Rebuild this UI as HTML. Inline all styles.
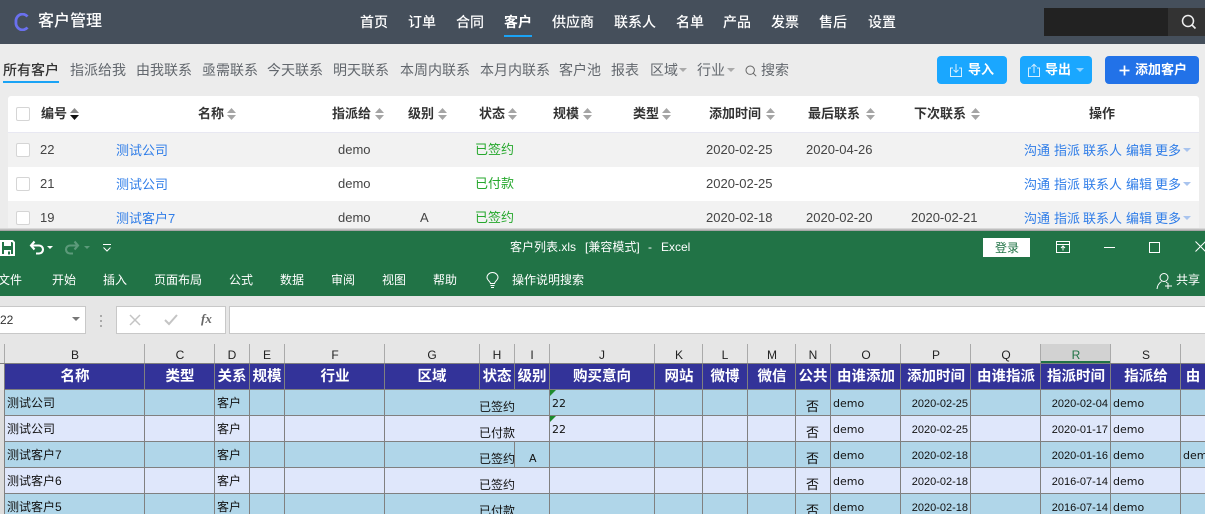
<!DOCTYPE html>
<html><head><meta charset="utf-8"><style>
html,body{margin:0;padding:0;width:1205px;height:514px;overflow:hidden;background:#ececec}
body{position:relative;font-family:"Liberation Sans","Noto Sans CJK SC",sans-serif}
span,b,i,div,svg{position:absolute;white-space:nowrap}
#hd{left:0;top:0;width:1205px;height:44px;background:#454f5b}
#hd span{top:12px;line-height:20px;font-size:14px;color:#fff;font-weight:500}
#sub span{top:60px;line-height:20px;font-size:14px;color:#62676d}
.btn{top:56px;height:28px;border-radius:4px;background:#1aa7ff;color:#fff;font-size:13px;line-height:28px;font-weight:700}
.th span{top:104px;line-height:20px;font-size:13px;font-weight:700;color:#333}
.s{width:9px;height:12px;top:108px}
.row{left:8px;width:1191px;height:34px}
.row span{top:7px;line-height:20px;font-size:13px;color:#444}
.row .l{color:#2f7de8;top:8px}.row .g{color:#26a82d}
.cb{left:8px;top:10px;width:12px;height:12px;border:1px solid #d5d5d5;border-radius:2px;background:#fff}
.x1{left:1016px}.x2{left:1046px}.x3{left:1075px}.x4{left:1118px}.x5{left:1147px}
.car{width:0;height:0;border:4px solid transparent;border-top:4px solid #a9c4ee;border-bottom:0}
#xl{left:0;top:231px;width:1205px;height:283px;background:#e6e6e6;overflow:hidden}
#gr{left:0;top:0;width:1205px;height:65px;background:#217346}
#gr span{color:#fff;font-size:12px;line-height:16px}
.tab span{top:41px}
.hl{top:113px;width:1px;height:19px;background:#aaa}
.cl{top:116px;line-height:16px;font-size:12px;color:#222;text-align:center;transform:translateX(-50%)}
.vh{top:133px;width:1px;height:26px;background:#808080}
.ch{top:134px;height:25px;line-height:25px;font-size:14.5px;font-weight:700;color:#fff;transform:translateX(-50%)}
.r{left:0;width:1205px;height:25px}
.r span{font-size:12px;line-height:16px;color:#111;top:5px}
.r .lo{top:9px}
.r .no{top:9px;font-size:13px}
.r .dm{font-family:"DejaVu Sans",sans-serif;font-size:11px;top:6px}
.r .dt{font-size:11px;top:6px;width:60px;text-align:right}
.r .tr{left:550px;top:0;width:0;height:0;border-top:6px solid #1c8a2c;border-right:6px solid transparent}
.v{width:1px;background:#808080}
</style></head><body>

<div id="hd">
<svg style="left:14px;top:13px" width="15" height="18" viewBox="0 0 15 18"><path d="M13.500 3.500A6.600 6.800 0 0 0 2 9a6.600 6.800 0 0 0 11.500 5.500" fill="none" stroke="#6a70ef" stroke-width="2.800"/></svg>
<span style="left:38px;top:11px;font-size:16px;line-height:22px">客户管理</span>
<span style="left:360px">首页</span><span style="left:408px">订单</span><span style="left:456px">合同</span><span style="left:504px;font-weight:700">客户</span><span style="left:552px">供应商</span><span style="left:614px">联系人</span><span style="left:676px">名单</span><span style="left:723px">产品</span><span style="left:771px">发票</span><span style="left:819px">售后</span><span style="left:868px">设置</span>
<div style="left:504px;top:35px;width:28px;height:2px;background:#1aa3f5"></div>
<div style="left:1044px;top:8px;width:124px;height:28px;background:#222"></div>
<div style="left:1168px;top:8px;width:37px;height:28px;background:#333"></div>
<svg style="left:1181px;top:14px" width="16" height="16" viewBox="0 0 16 16"><circle cx="7" cy="7" r="5.500" fill="none" stroke="#f0f0f0" stroke-width="1.500"/><path d="M11 11l3.500 3.500" stroke="#f0f0f0" stroke-width="1.600"/></svg>
</div>

<div id="sub">
<span style="left:3px;color:#333;font-weight:500">所有客户</span>
<div style="left:3px;top:81px;width:56px;height:2px;background:#1aa3f5"></div>
<span style="left:70px">指派给我</span><span style="left:136px">由我联系</span><span style="left:202px">亟需联系</span><span style="left:267px">今天联系</span><span style="left:333px">明天联系</span><span style="left:400px">本周内联系</span><span style="left:480px">本月内联系</span><span style="left:559px">客户池</span><span style="left:611px">报表</span><span style="left:650px">区域</span><span style="left:697px">行业</span><span style="left:761px">搜索</span>
<div class="car" style="left:679px;top:68px;border-top-color:#aaa"></div>
<div class="car" style="left:727px;top:68px;border-top-color:#aaa"></div>
<svg style="left:745px;top:65px" width="12" height="12" viewBox="0 0 12 12"><circle cx="5.200" cy="5.200" r="4.200" fill="none" stroke="#666" stroke-width="1"/><path d="M8.200 8.200l3 3" stroke="#666"/></svg>
</div>

<div class="btn" style="left:937px;width:70px"><span style="left:31px">导入</span>
<svg style="left:12px;top:7px" width="14" height="15" viewBox="0 0 14 15"><path d="M4 5H1.500v8.500h11V5H10M7 1v8M4.500 6.800L7 9.300l2.500-2.500" fill="none" stroke="#d5efff" stroke-width="1"/></svg></div>
<div class="btn" style="left:1020px;width:72px"><span style="left:25px">导出</span>
<svg style="left:7px;top:7px" width="14" height="15" viewBox="0 0 14 15"><path d="M4 5H1.500v8.500h11V5H10M7 10V1.500M4.500 3.800L7 1.300l2.500 2.500" fill="none" stroke="#d5efff" stroke-width="1"/></svg>
<div class="car" style="left:56px;top:12px;border-top-color:#8fd2ff"></div></div>
<div class="btn" style="left:1105px;width:94px;background:#2272e8"><span style="left:30px">添加客户</span>
<svg style="left:14px;top:9px" width="11" height="11" viewBox="0 0 11 11"><path d="M5.500 .5v10M.5 5.500h10" stroke="#fff" stroke-width="1.700"/></svg></div>

<div style="left:8px;top:96px;width:1191px;height:36px;background:#fff;border-radius:3px 3px 0 0"></div>
<div style="left:8px;top:132px;width:1191px;height:1px;background:#e8e8f2"></div>
<div class="cb" style="left:16px;top:107px"></div>
<div class="th">
<span style="left:41px">编号</span><span style="left:198px">名称</span><span style="left:332px">指派给</span><span style="left:408px">级别</span><span style="left:479px">状态</span><span style="left:553px">规模</span><span style="left:633px">类型</span><span style="left:709px">添加时间</span><span style="left:808px">最后联系</span><span style="left:914px">下次联系</span><span style="left:1089px">操作</span>
</div>
<svg width="0" height="0" style="left:0;top:0"><defs><g id="so"><path d="M0 5L4.500 0 9 5zM0 7l4.500 5L9 7z" fill="#a5a5a5"/></g></defs></svg>
<svg class="s" style="left:70px"><path d="M0 5L4.500 0 9 5z" fill="#888"/><path d="M0 7l4.500 5L9 7z" fill="#111"/></svg>
<svg class="s" style="left:227px"><use href="#so"/></svg>
<svg class="s" style="left:375px"><use href="#so"/></svg>
<svg class="s" style="left:438px"><use href="#so"/></svg>
<svg class="s" style="left:508px"><use href="#so"/></svg>
<svg class="s" style="left:583px"><use href="#so"/></svg>
<svg class="s" style="left:662px"><use href="#so"/></svg>
<svg class="s" style="left:766px"><use href="#so"/></svg>
<svg class="s" style="left:866px"><use href="#so"/></svg>
<svg class="s" style="left:971px"><use href="#so"/></svg>

<div class="row" style="top:133px;background:#f2f2f2"><div class="cb"></div>
<span style="left:32px">22</span><span class="l" style="left:108px">测试公司</span><span style="left:330px">demo</span><span class="g" style="left:467px">已签约</span><span style="left:698px">2020-02-25</span><span style="left:798px">2020-04-26</span>
<span class="l x1">沟通</span><span class="l x2">指派</span><span class="l x3">联系人</span><span class="l x4">编辑</span><span class="l x5">更多</span><div class="car" style="left:1175px;top:15px"></div></div>
<div class="row" style="top:167px;background:#fff"><div class="cb"></div>
<span style="left:32px">21</span><span class="l" style="left:108px">测试公司</span><span style="left:330px">demo</span><span class="g" style="left:467px">已付款</span><span style="left:698px">2020-02-25</span>
<span class="l x1">沟通</span><span class="l x2">指派</span><span class="l x3">联系人</span><span class="l x4">编辑</span><span class="l x5">更多</span><div class="car" style="left:1175px;top:15px"></div></div>
<div class="row" style="top:201px;background:#f2f2f2"><div class="cb"></div>
<span style="left:32px">19</span><span class="l" style="left:108px">测试客户7</span><span style="left:330px">demo</span><span style="left:412px">A</span><span class="g" style="left:467px">已签约</span><span style="left:698px">2020-02-18</span><span style="left:798px">2020-02-20</span><span style="left:903px">2020-02-21</span>
<span class="l x1">沟通</span><span class="l x2">指派</span><span class="l x3">联系人</span><span class="l x4">编辑</span><span class="l x5">更多</span><div class="car" style="left:1175px;top:15px"></div></div>
<div style="left:0;top:228px;width:1205px;height:3px;background:linear-gradient(#e4e4e4,#9a9a9a)"></div>

<div id="xl">
<div id="gr">
<svg style="left:0;top:9px" width="15" height="16" viewBox="0 0 15 16"><path d="M1 1h11.500L14 2.500V15H1z" fill="none" stroke="#fff" stroke-width="2"/><path d="M4 1h7v5H4zM4 10h7v5H4z" fill="#fff"/><path d="M8 11.500h2v3H8z" fill="#217346"/></svg>
<svg style="left:29px;top:9px" width="16" height="16" viewBox="0 0 16 16"><path d="M5.500 1.500L2 5.500l3.500 4M2.500 5.500H10a3.800 3.800 0 0 1 0 8H7" fill="none" stroke="#fff" stroke-width="2.100"/></svg>
<div class="car" style="left:47px;top:15px;border-width:3px 3px 0;border-top:3px solid #fff"></div>
<svg style="left:64px;top:9px" width="16" height="16" viewBox="0 0 16 16"><path d="M10.500 1.500L14 5.500l-3.500 4M13.500 5.500H6a3.800 3.800 0 0 0 0 8h3" fill="none" stroke="#5c9a7a" stroke-width="2.100"/></svg>
<div class="car" style="left:84px;top:15px;border-width:3px 3px 0;border-top:3px solid #5c9a7a"></div>
<svg style="left:102px;top:12px" width="10" height="10" viewBox="0 0 10 10"><path d="M1 1.500h8M1.500 4.500L5 8l3.500-3.500" fill="none" stroke="#fff"/></svg>
<span style="left:510px;top:8px">客户列表.xls</span><span style="left:585px;top:8px">[兼容模式]</span><span style="left:648px;top:8px">-</span><span style="left:661px;top:8px">Excel</span>
<div style="left:983px;top:7px;width:47px;height:19px;background:#fff"></div>
<span style="left:995px;top:9px;color:#217346">登录</span>
<svg style="left:1056px;top:10px" width="14" height="12" viewBox="0 0 14 12"><path d="M.5.5h13v11H.5zM.5 3.500h13M7 9.500V5M5 7l2-2 2 2" fill="none" stroke="#fff"/></svg>
<div style="left:1104px;top:16px;width:11px;height:1px;background:#fff"></div>
<div style="left:1149px;top:11px;width:9px;height:9px;border:1px solid #fff"></div>
<svg style="left:1195px;top:10px" width="11" height="11" viewBox="0 0 11 11"><path d="M.5.5l10 10M10.500.5l-10 10" stroke="#fff"/></svg>
<div class="tab">
<span style="left:-2px">文件</span><span style="left:52px">开始</span><span style="left:103px">插入</span><span style="left:154px">页面布局</span><span style="left:229px">公式</span><span style="left:280px">数据</span><span style="left:331px">审阅</span><span style="left:382px">视图</span><span style="left:433px">帮助</span><span style="left:512px">操作说明搜索</span><span style="left:1176px">共享</span>
</div>
<svg style="left:486px;top:41px" width="13" height="17" viewBox="0 0 13 17"><path d="M4.500 11.500C4 9 1 8 1 5.500a5.500 5 0 0 1 11 0C12 8 9 9 8.500 11.500zM4.500 13.500h4M5 15.500h3" fill="none" stroke="#fff"/></svg>
<svg style="left:1156px;top:41px" width="17" height="18" viewBox="0 0 17 18"><circle cx="8" cy="5.500" r="4" fill="none" stroke="#fff"/><path d="M1 17c.5-4 2-6 4.500-7.500M10 10l1.500 1M12 11v6M9 14h7" fill="none" stroke="#fff"/></svg>
</div>

<div style="left:-2px;top:75px;width:86px;height:26px;background:#fff;border:1px solid #c8c8c8"></div>
<span style="left:0;top:81px;font-size:12px;line-height:16px;color:#333">22</span>
<div class="car" style="left:72px;top:86px;border-top-color:#777"></div>
<div style="left:100px;top:84px;width:2px;height:2px;background:#aaa;box-shadow:0 5px #aaa,0 10px #aaa"></div>
<div style="left:116px;top:75px;width:108px;height:26px;background:#fff;border:1px solid #c8c8c8"></div>
<svg style="left:129px;top:83px" width="12" height="12" viewBox="0 0 12 12"><path d="M1 1l10 10M11 1L1 11" stroke="#c4c4c4" stroke-width="1.500"/></svg>
<svg style="left:164px;top:83px" width="14" height="12" viewBox="0 0 14 12"><path d="M1 6l4 4 8-9" fill="none" stroke="#c4c4c4" stroke-width="2"/></svg>
<span style="left:201px;top:80px;font-family:'Liberation Serif',serif;font-style:italic;font-size:13px;line-height:16px;color:#666;font-weight:700">fx</span>
<div style="left:229px;top:75px;width:980px;height:26px;background:#fff;border:1px solid #c8c8c8"></div>

<div style="left:1040px;top:113px;width:71px;height:18px;background:#d2d2d2"></div>
<div style="left:1040px;top:130px;width:71px;height:2px;background:#217346"></div>
<div class="hl" style="left:4px"></div><div class="hl" style="left:144px"></div><div class="hl" style="left:214px"></div><div class="hl" style="left:249px"></div><div class="hl" style="left:284px"></div><div class="hl" style="left:384px"></div><div class="hl" style="left:479px"></div><div class="hl" style="left:514px"></div><div class="hl" style="left:549px"></div><div class="hl" style="left:654px"></div><div class="hl" style="left:702px"></div><div class="hl" style="left:747px"></div><div class="hl" style="left:795px"></div><div class="hl" style="left:830px"></div><div class="hl" style="left:900px"></div><div class="hl" style="left:970px"></div><div class="hl" style="left:1040px"></div><div class="hl" style="left:1110px"></div><div class="hl" style="left:1180px"></div>
<span class="cl" style="left:75px">B</span><span class="cl" style="left:180px">C</span><span class="cl" style="left:232px">D</span><span class="cl" style="left:267px">E</span><span class="cl" style="left:335px">F</span><span class="cl" style="left:432px">G</span><span class="cl" style="left:497px">H</span><span class="cl" style="left:532px">I</span><span class="cl" style="left:602px">J</span><span class="cl" style="left:679px">K</span><span class="cl" style="left:725px">L</span><span class="cl" style="left:772px">M</span><span class="cl" style="left:813px">N</span><span class="cl" style="left:866px">O</span><span class="cl" style="left:936px">P</span><span class="cl" style="left:1006px">Q</span><span class="cl" style="left:1076px;color:#217346">R</span><span class="cl" style="left:1146px">S</span>

<div style="left:0;top:132px;width:1205px;height:1px;background:#808080"></div>
<div style="left:4px;top:133px;width:1201px;height:26px;background:#333399"></div>
<div class="vh" style="left:4px"></div><div class="vh" style="left:144px"></div><div class="vh" style="left:214px"></div><div class="vh" style="left:249px"></div><div class="vh" style="left:284px"></div><div class="vh" style="left:384px"></div><div class="vh" style="left:479px"></div><div class="vh" style="left:514px"></div><div class="vh" style="left:549px"></div><div class="vh" style="left:654px"></div><div class="vh" style="left:702px"></div><div class="vh" style="left:747px"></div><div class="vh" style="left:795px"></div><div class="vh" style="left:830px"></div><div class="vh" style="left:900px"></div><div class="vh" style="left:970px"></div><div class="vh" style="left:1040px"></div><div class="vh" style="left:1110px"></div><div class="vh" style="left:1180px"></div>
<span class="ch" style="left:75px">名称</span><span class="ch" style="left:180px">类型</span><span class="ch" style="left:232px">关系</span><span class="ch" style="left:267px">规模</span><span class="ch" style="left:335px">行业</span><span class="ch" style="left:432px">区域</span><span class="ch" style="left:497px">状态</span><span class="ch" style="left:532px">级别</span><span class="ch" style="left:602px">购买意向</span><span class="ch" style="left:679px">网站</span><span class="ch" style="left:725px">微博</span><span class="ch" style="left:772px">微信</span><span class="ch" style="left:813px">公共</span><span class="ch" style="left:866px">由谁添加</span><span class="ch" style="left:936px">添加时间</span><span class="ch" style="left:1006px">由谁指派</span><span class="ch" style="left:1076px">指派时间</span><span class="ch" style="left:1146px">指派给</span><span class="ch" style="left:1193px">由</span>

<div style="left:0;top:159px;width:4px;height:124px;background:#ddd"></div>
<div style="left:4px;top:159px;width:1201px;height:26px;background:#b0d6e9"></div>
<div style="left:4px;top:185px;width:1201px;height:26px;background:#dfe7fb"></div>
<div style="left:4px;top:211px;width:1201px;height:26px;background:#b0d6e9"></div>
<div style="left:4px;top:237px;width:1201px;height:26px;background:#dfe7fb"></div>
<div style="left:4px;top:263px;width:1201px;height:20px;background:#b0d6e9"></div>
<div style="left:4px;top:158px;width:1201px;height:1px;background:#808080"></div>
<div style="left:4px;top:184px;width:1201px;height:1px;background:#808080"></div>
<div style="left:4px;top:210px;width:1201px;height:1px;background:#808080"></div>
<div style="left:4px;top:236px;width:1201px;height:1px;background:#808080"></div>
<div style="left:4px;top:262px;width:1201px;height:1px;background:#808080"></div>
<div class="v" style="left:4px;top:159px;height:124px"></div><div class="v" style="left:144px;top:159px;height:124px"></div><div class="v" style="left:214px;top:159px;height:124px"></div><div class="v" style="left:249px;top:159px;height:124px"></div><div class="v" style="left:284px;top:159px;height:124px"></div><div class="v" style="left:384px;top:159px;height:124px"></div><div class="v" style="left:549px;top:159px;height:124px"></div><div class="v" style="left:654px;top:159px;height:124px"></div><div class="v" style="left:702px;top:159px;height:124px"></div><div class="v" style="left:747px;top:159px;height:124px"></div><div class="v" style="left:795px;top:159px;height:124px"></div><div class="v" style="left:830px;top:159px;height:124px"></div><div class="v" style="left:900px;top:159px;height:124px"></div><div class="v" style="left:970px;top:159px;height:124px"></div><div class="v" style="left:1040px;top:159px;height:124px"></div><div class="v" style="left:1110px;top:159px;height:124px"></div><div class="v" style="left:1180px;top:159px;height:124px"></div>
<div class="v" style="left:514px;top:211px;height:25px"></div>

<div class="r" style="top:159px"><span style="left:7px">测试公司</span><span style="left:217px">客户</span><span class="lo" style="left:479px">已签约</span><div class="tr"></div><span class="dm" style="left:552px">22</span><span class="no" style="left:806px">否</span><span class="dm" style="left:833px">demo</span><span class="dt" style="left:908px">2020-02-25</span><span class="dt" style="left:1048px">2020-02-04</span><span class="dm" style="left:1113px">demo</span></div>
<div class="r" style="top:185px"><span style="left:7px">测试公司</span><span style="left:217px">客户</span><span class="lo" style="left:479px">已付款</span><div class="tr"></div><span class="dm" style="left:552px">22</span><span class="no" style="left:806px">否</span><span class="dm" style="left:833px">demo</span><span class="dt" style="left:908px">2020-02-25</span><span class="dt" style="left:1048px">2020-01-17</span><span class="dm" style="left:1113px">demo</span></div>
<div class="r" style="top:211px"><span style="left:7px">测试客户7</span><span style="left:217px">客户</span><span class="lo" style="left:479px">已签约</span><span class="dm" style="left:529px;top:9px">A</span><span class="no" style="left:806px">否</span><span class="dm" style="left:833px">demo</span><span class="dt" style="left:908px">2020-02-18</span><span class="dt" style="left:1048px">2020-01-16</span><span class="dm" style="left:1113px">demo</span><span class="dm" style="left:1183px">dem</span></div>
<div class="r" style="top:237px"><span style="left:7px">测试客户6</span><span style="left:217px">客户</span><span class="lo" style="left:479px">已签约</span><span class="no" style="left:806px">否</span><span class="dm" style="left:833px">demo</span><span class="dt" style="left:908px">2020-02-18</span><span class="dt" style="left:1048px">2016-07-14</span><span class="dm" style="left:1113px">demo</span></div>
<div class="r" style="top:263px;height:20px;overflow:hidden"><span style="left:7px">测试客户5</span><span style="left:217px">客户</span><span class="lo" style="left:479px">已付款</span><span class="no" style="left:806px">否</span><span class="dm" style="left:833px">demo</span><span class="dt" style="left:908px">2020-02-18</span><span class="dt" style="left:1048px">2016-07-14</span><span class="dm" style="left:1113px">demo</span></div>
</div>
</body></html>
